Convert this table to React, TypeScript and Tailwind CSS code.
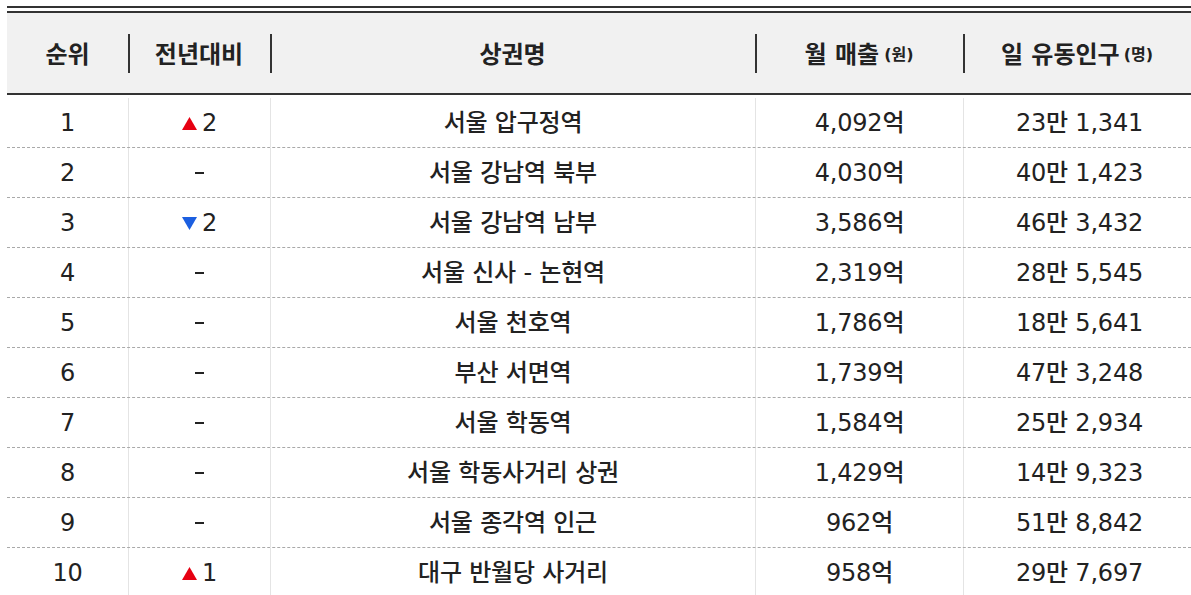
import React from "react";

type Row = {
  rank: number;
  change: number;
  name: string;
  sales: string;
  people: string;
};

const rows: Row[] = [
  { rank: 1, change: 2, name: "서울 압구정역", sales: "4,092억", people: "23만 1,341" },
  { rank: 2, change: 0, name: "서울 강남역 북부", sales: "4,030억", people: "40만 1,423" },
  { rank: 3, change: -2, name: "서울 강남역 남부", sales: "3,586억", people: "46만 3,432" },
  { rank: 4, change: 0, name: "서울 신사 - 논현역", sales: "2,319억", people: "28만 5,545" },
  { rank: 5, change: 0, name: "서울 천호역", sales: "1,786억", people: "18만 5,641" },
  { rank: 6, change: 0, name: "부산 서면역", sales: "1,739억", people: "47만 3,248" },
  { rank: 7, change: 0, name: "서울 학동역", sales: "1,584억", people: "25만 2,934" },
  { rank: 8, change: 0, name: "서울 학동사거리 상권", sales: "1,429억", people: "14만 9,323" },
  { rank: 9, change: 0, name: "서울 종각역 인근", sales: "962억", people: "51만 8,842" },
  { rank: 10, change: 1, name: "대구 반월당 사거리", sales: "958억", people: "29만 7,697" },
];

const font = {
  fontFamily: '"DejaVu Sans", "Noto Sans CJK KR", sans-serif',
};

const Change = ({ value }: { value: number }) => {
  if (value === 0) return <span className="block h-[2px] w-[9px] bg-[#222]" />;
  const up = value > 0;
  return (
    <span className="flex items-center gap-[5px]">
      <svg width="15" height="13" viewBox="0 0 15 13" className="mt-[1px]">
        {up ? (
          <polygon points="7.5,0 15,13 0,13" fill="#e60012" />
        ) : (
          <polygon points="0,0 15,0 7.5,13" fill="#1c5fe0" />
        )}
      </svg>
      <span>{Math.abs(value)}</span>
    </span>
  );
};

const HeadCell = ({
  className,
  children,
  sep = true,
}: {
  className: string;
  children: React.ReactNode;
  sep?: boolean;
}) => (
  <div className={`relative flex h-full items-center justify-center pt-[4px] ${className}`}>
    {sep && <span className="absolute left-0 top-[21px] h-[39px] w-[2px] bg-[#333]" />}
    {children}
  </div>
);

export default function App() {
  return (
    <div className="h-[595px] w-[1191px] overflow-hidden bg-white pl-[7px] pt-[6px] text-[#222]" style={font}>
      <div className="border-t-[2px] border-[#333] pt-[3px]">
        <div className="flex h-[84px] items-stretch border-t-[2px] border-b-[2px] border-[#333] bg-[#f1f1f1] text-[24px] font-bold">
          <HeadCell className="w-[121px]" sep={false}>
            순위
          </HeadCell>
          <HeadCell className="w-[142px]">전년대비</HeadCell>
          <HeadCell className="w-[485px]">상권명</HeadCell>
          <HeadCell className="w-[208px]">
            월 매출
            <span className="ml-[5px] text-[16px]">(원)</span>
          </HeadCell>
          <HeadCell className="flex-1">
            일 유동인구
            <span className="ml-[4px] text-[16px]">(명)</span>
          </HeadCell>
        </div>
        <div className="pt-[3px] text-[24px] font-medium tracking-[-0.2px]">
          {rows.map((r, i) => (
            <div
              key={r.rank}
              className={`flex h-[50px] items-stretch ${
                i < rows.length - 1 ? "border-b border-dashed border-[#a9a9a9]" : ""
              }`}
            >
              <div className="flex w-[121px] items-center justify-center">{r.rank}</div>
              <div className="flex w-[142px] items-center justify-center border-l border-[#e4e4e4]">
                <Change value={r.change} />
              </div>
              <div className="flex w-[485px] items-center justify-center border-l border-[#e4e4e4]">
                {r.name}
              </div>
              <div className="flex w-[208px] items-center justify-center border-l border-[#e4e4e4]">
                {r.sales}
              </div>
              <div className="flex flex-1 items-center justify-center border-l border-[#e4e4e4] pl-[4px]">
                {r.people}
              </div>
            </div>
          ))}
        </div>
      </div>
    </div>
  );
}
